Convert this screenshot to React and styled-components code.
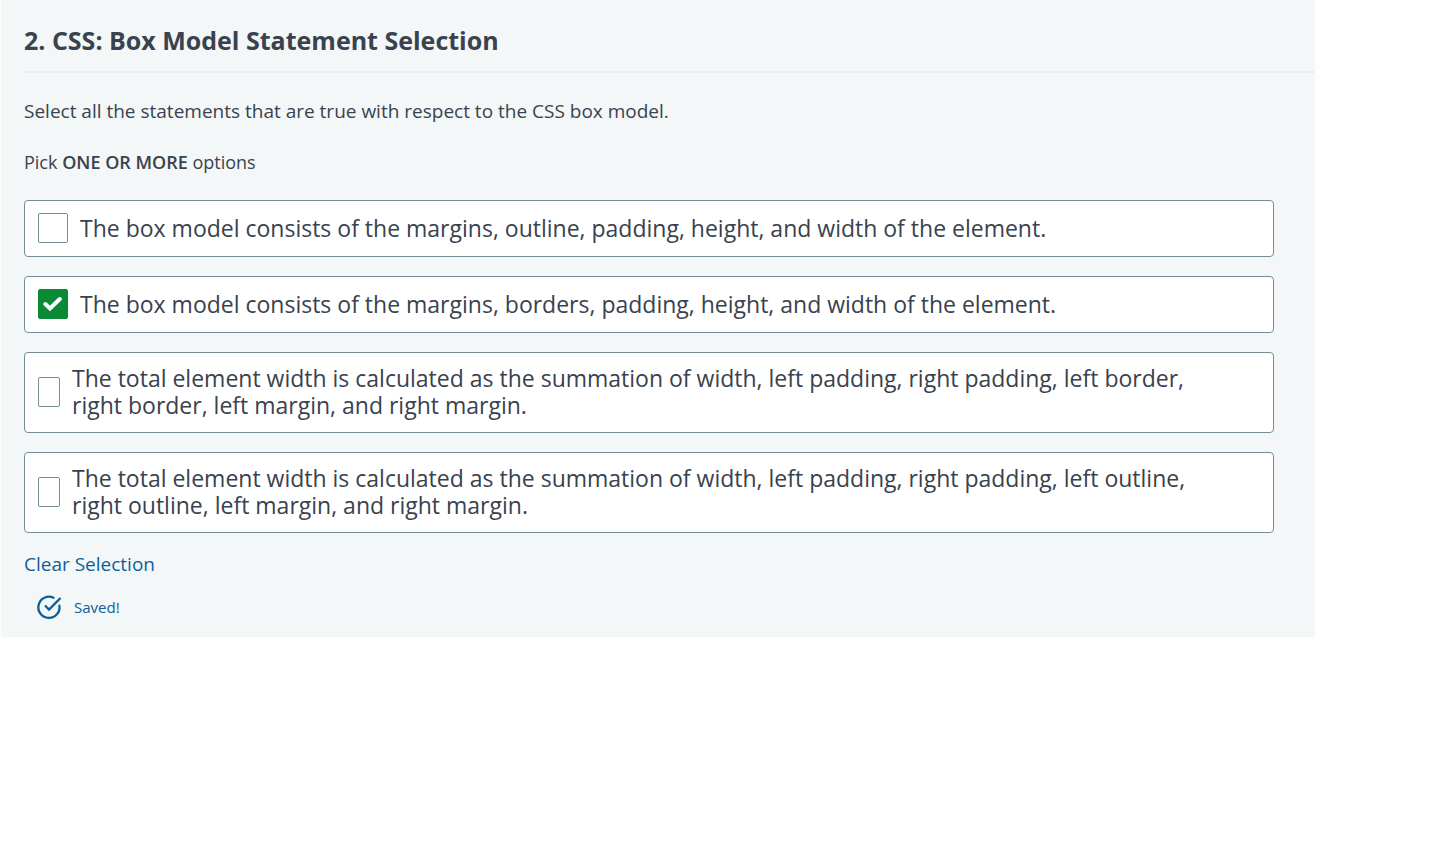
import React, { useState } from "react";
import styled, { createGlobalStyle } from "styled-components";

const GlobalStyle = createGlobalStyle`
  *, *::before, *::after { box-sizing: border-box; }
  body {
    margin: 0;
    background: #fff;
    color: #39424e;
    font-family: "Open Sans", "Noto Sans", sans-serif;
    font-weight: 400;
  }
`;

const Panel = styled.main`
  margin: 0 131px 0 1px;
  padding: 23px 0 16px 23px;
  background: #f3f7f7;
`;

const Title = styled.h1`
  margin: 0;
  padding-bottom: 14px;
  border-bottom: 2px solid #e7eeef;
  font-size: 25px;
  line-height: 34px;
  font-weight: 700;
`;

const Prompt = styled.p`
  margin: 24px 0 0;
  font-size: 19px;
  line-height: 28px;
`;

const Choices = styled.fieldset`
  margin: 24px 41px 0 0;
  padding: 0;
  border: 0;
  min-width: 0;
`;

const Legend = styled.legend`
  padding: 0;
  margin-bottom: 25px;
  font-size: 18px;
  line-height: 26px;

  strong { font-weight: 600; }
`;

const OptionList = styled.div`
  display: flex;
  flex-direction: column;
  gap: 19px;
`;

const Option = styled.label`
  display: flex;
  align-items: center;
  gap: 12px;
  padding: 12px 64px 13px 13px;
  background: #fff;
  border: 1px solid #738f93;
  border-radius: 4px;
  font-size: 23px;
  line-height: 27px;
  cursor: pointer;
`;

const BoxHolder = styled.span`
  display: grid;
  flex: none;
  width: ${({ $narrow }) => ($narrow ? 22 : 30)}px;
  height: 30px;

  & > * { grid-area: 1 / 1; }
`;

const Checkbox = styled.input`
  appearance: none;
  width: 100%;
  height: 100%;
  margin: 0;
  background: #fff;
  border: 1px solid #738f93;
  border-radius: 2px;
  cursor: pointer;

  &:checked {
    background: #0b8a35;
    border-color: #0b8a35;
  }
`;

const Tick = styled.svg`
  place-self: center;
  width: 20px;
  height: 16px;
  pointer-events: none;
`;

const ClearButton = styled.button`
  display: block;
  margin: 17px 0 0;
  padding: 0;
  border: 0;
  background: none;
  color: #0e5f97;
  font-family: inherit;
  font-size: 19px;
  line-height: 28px;
  cursor: pointer;
`;

const Status = styled.div`
  display: flex;
  align-items: center;
  gap: 12px;
  margin: 15px 0 0 12px;
  color: #0e5f97;
  font-size: 15px;
  line-height: 28px;
`;

const STATEMENTS = [
  { text: "The box model consists of the margins, outline, padding, height, and width of the element." },
  { text: "The box model consists of the margins, borders, padding, height, and width of the element." },
  {
    text: "The total element width is calculated as the summation of width, left padding, right padding, left border, right border, left margin, and right margin.",
    long: true,
  },
  {
    text: "The total element width is calculated as the summation of width, left padding, right padding, left outline, right outline, left margin, and right margin.",
    long: true,
  },
];

export default function App() {
  const [selected, setSelected] = useState([1]);
  const toggle = (index) =>
    setSelected((now) => (now.includes(index) ? now.filter((i) => i !== index) : [...now, index]));

  return (
    <>
      <GlobalStyle />
      <Panel>
        <Title>2. CSS: Box Model Statement Selection</Title>
        <Prompt>Select all the statements that are true with respect to the CSS box model.</Prompt>
        <Choices>
          <Legend>
            Pick <strong>ONE OR MORE</strong> options
          </Legend>
          <OptionList>
            {STATEMENTS.map(({ text, long }, index) => (
              <Option key={text} htmlFor={`option-${index}`}>
                <BoxHolder $narrow={long}>
                  <Checkbox
                    type="checkbox"
                    id={`option-${index}`}
                    checked={selected.includes(index)}
                    onChange={() => toggle(index)}
                  />
                  {selected.includes(index) && (
                    <Tick viewBox="0 0 20 16" aria-hidden="true">
                      <path d="M2.3 8 7 12.4 16.8 3" fill="none" stroke="#fff" strokeWidth="4" strokeLinecap="round" />
                    </Tick>
                  )}
                </BoxHolder>
                <span>{text}</span>
              </Option>
            ))}
          </OptionList>
        </Choices>
        <ClearButton type="button" onClick={() => setSelected([])}>
          Clear Selection
        </ClearButton>
        <Status role="status">
          <svg width="26" height="26" viewBox="0 0 26 26" fill="none" stroke="#0e5f97" strokeWidth="2.3" aria-hidden="true">
            <path d="M17.6 3.8A10.6 10.6 0 1 0 23.4 11.6" strokeLinecap="round" />
            <path d="M9 11.5 13 15.5 24.5 4" />
          </svg>
          <span>Saved!</span>
        </Status>
      </Panel>
    </>
  );
}
